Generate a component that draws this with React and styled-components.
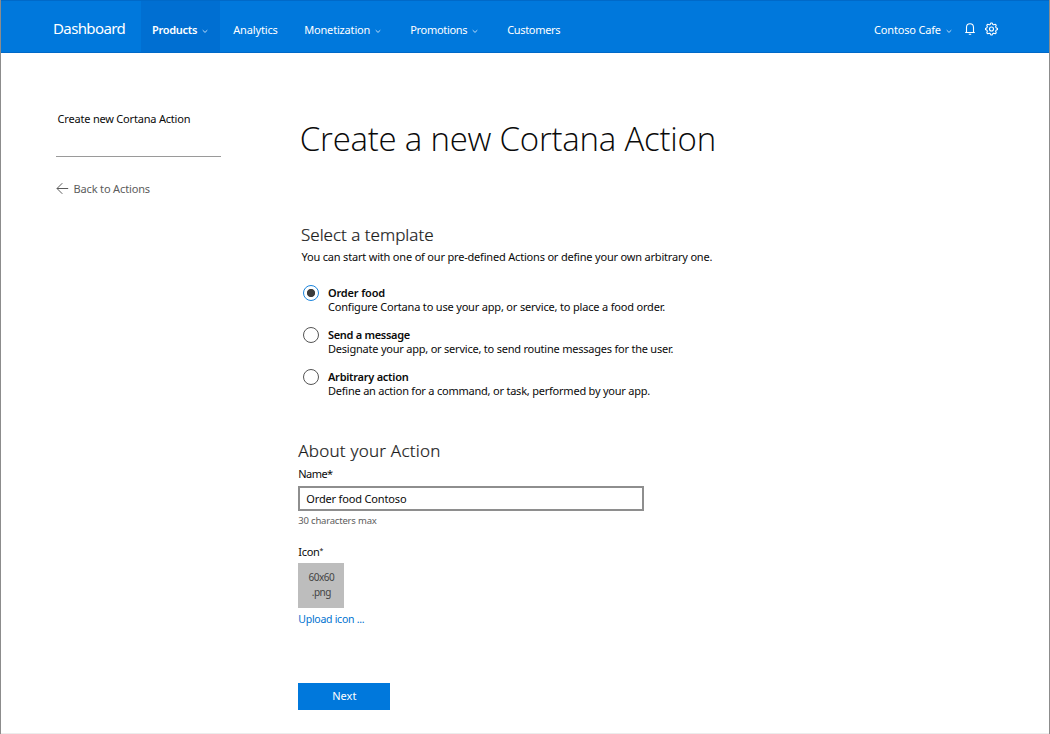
import React, { useState } from 'react';
import styled, { createGlobalStyle } from 'styled-components';

const GlobalStyle = createGlobalStyle`
  * { box-sizing: border-box; }
  body {
    margin: 0;
    background: #fff;
    color: #0a0a0a;
    font: 400 11px/14px "Noto Sans", "Open Sans", sans-serif;
  }
`;

const Page = styled.div`
  height: 734px;
  overflow: hidden;
  display: flex;
  flex-direction: column;
  border: solid #8c8c8c;
  border-width: 0 1px;
  box-shadow: inset 0 -1px #ececec;
`;

const Header = styled.header`
  height: 53px;
  margin: 0 -1px;
  flex: none;
  display: flex;
  align-items: stretch;
  background: #0078dc;
  border: 1px solid #0069c8;
  color: #fff;
`;

const Brand = styled.div`
  width: 140px;
  padding: 16px 0 0 52px;
  font-size: 15px;
  line-height: 22px;
  letter-spacing: -0.62px;
`;

const NavItem = styled.a`
  width: ${(p) => p.$width}px;
  padding: 22px 0 0 ${(p) => (p.$active ? 11 : 13.2)}px;
  display: flex;
  align-items: flex-start;
  gap: 5px;
  white-space: nowrap;
  background: ${(p) => (p.$active ? '#006fd2' : 'transparent')};
  font-weight: ${(p) => (p.$active ? 600 : 400)};
  letter-spacing: ${(p) => p.$track}px;
`;

const Account = styled.div`
  margin-left: auto;
  width: 175px;
  padding-top: 22px;
  display: flex;
  align-items: flex-start;
  white-space: nowrap;
  letter-spacing: -0.17px;

  & > svg:nth-of-type(1) { margin-left: 5px; }
  & > svg:nth-of-type(2) { margin: 0 0 0 13px; }
  & > svg:nth-of-type(3) { margin: -1px 0 0 10px; }
`;

const ChevronSvg = styled.svg`
  flex: none;
  margin-top: 6px;
`;

const Body = styled.div`
  flex: 1;
  display: flex;
  padding-left: 55px;
  gap: 77.3px;
`;

const Sidebar = styled.aside`
  width: 165px;
  padding-top: 59px;
`;

const SidebarTitle = styled.div`
  height: 45px;
  padding-left: 1.6px;
  border-bottom: 1px solid #9a9a9a;
  letter-spacing: -0.2px;
`;

const BackLink = styled.a`
  margin-top: 25px;
  display: flex;
  gap: 4.5px;
  color: #5c5c5c;
  letter-spacing: -0.15px;
`;

const Main = styled.main`
  padding-top: 64px;
  display: flex;
  flex-direction: column;
  align-items: flex-start;
`;

const Title = styled.h1`
  margin: 0 0 62px 1.5px;
  font-family: "Open Sans", "Noto Sans", sans-serif;
  font-weight: 300;
  font-size: 33px;
  line-height: 44px;
  letter-spacing: -0.23px;
`;

const SectionTitle = styled.h2`
  margin: 0;
  font-weight: 300;
  font-size: 17px;
  line-height: 24px;
  letter-spacing: ${(p) => p.$track}px;
  color: #1c1c1c;
  -webkit-text-stroke: 0.2px #1c1c1c;
`;

const TemplateSection = styled.section`
  padding-left: 2.7px;
`;

const Intro = styled.p`
  margin: 3px 0 22px;
  padding-left: 0.5px;
  letter-spacing: -0.19px;
`;

const Option = styled.label`
  display: flex;
  gap: 9px;
  margin: 0 0 14px 2px;
`;

const Radio = styled.input`
  appearance: none;
  width: 16px;
  height: 16px;
  margin: -1px 0 0;
  border: 1px solid ${(p) => (p.checked ? '#1a84dd' : '#555')};
  border-radius: 50%;
  background: ${(p) =>
    p.checked ? 'radial-gradient(circle, #3c3c3c 3.7px, #fff 4.5px)' : '#fff'};
`;

const OptionName = styled.div`
  font-weight: 600;
  letter-spacing: ${(p) => p.$track}px;
`;

const OptionText = styled.div`
  letter-spacing: ${(p) => p.$track}px;
`;

const AboutSection = styled.section`
  margin-top: 27px;
  display: flex;
  flex-direction: column;
  align-items: flex-start;
`;

const FieldLabel = styled.label`
  margin-top: ${(p) => p.$top}px;
  letter-spacing: ${(p) => p.$track}px;
`;

const TextInput = styled.input`
  width: 346px;
  height: 25px;
  margin-top: 5px;
  padding: 0 6px 1px;
  border: 2px solid #8e8e8e;
  outline: none;
  font: inherit;
  color: inherit;
  letter-spacing: -0.16px;
`;

const Hint = styled.div`
  margin-top: 4px;
  font-size: 9.5px;
  line-height: 12px;
  letter-spacing: -0.2px;
  color: #5c5c5c;
`;

const Asterisk = styled.span`
  font-size: 7px;
  line-height: 1;
  vertical-align: 3px;
`;

const IconPreview = styled.div`
  width: 46px;
  height: 45px;
  margin-top: 4px;
  padding-top: 7px;
  background: #bdbdbd;
  color: #444;
  font-size: 10px;
  line-height: 15px;
  letter-spacing: -0.5px;
  text-align: center;
`;

const UploadLink = styled.a`
  margin-top: 4px;
  font-size: 10.5px;
  letter-spacing: -0.27px;
  color: #0072d0;
`;

const NextButton = styled.button`
  width: 92px;
  height: 27px;
  margin-top: 57px;
  padding: 0 0 1px;
  border: 0;
  background: #0078dc;
  color: #fff;
  font: inherit;
`;

const Chevron = () => (
  <ChevronSvg width="6" height="5" viewBox="0 0 6 5" fill="none" stroke="#cfe5f8" strokeWidth="0.9">
    <path d="M.7 1.2 3 3.4 5.3 1.2" />
  </ChevronSvg>
);

const Bell = () => (
  <svg width="10" height="13" viewBox="0 0 10 13" fill="none" stroke="#fff" strokeWidth="1.1">
    <path d="M.2 9.500h9.600M1.500 9.500V4.400C1.500 2 3 .7 5 .7s3.500 1.300 3.500 3.700v5.100M3.800 11.200h2.400" />
  </svg>
);

const gearOutline = Array.from({ length: 32 }, (_, i) => {
  const angle = ((i - 0.5) * Math.PI) / 16;
  const r = i % 4 < 2 ? 6.1 : 4.7;
  return `${(6.5 + r * Math.cos(angle)).toFixed(2)},${(6.5 + r * Math.sin(angle)).toFixed(2)}`;
}).join(' ');

const Gear = () => (
  <svg width="13" height="14" viewBox="0 -.5 13 14" fill="none" stroke="#fff" strokeWidth="1.1">
    <polygon points={gearOutline} strokeLinejoin="round" />
    <circle cx="6.5" cy="6.5" r="2" />
  </svg>
);

const ArrowLeft = () => (
  <svg width="13" height="14" viewBox="0 0 13 14" fill="none" stroke="#5c5c5c" strokeWidth="1">
    <path d="M12.200 6.500H1M6.300 1.200 1 6.500l5.300 5.300" />
  </svg>
);

const navItems = [
  { label: 'Products', width: 79, track: -0.3, menu: true, active: true },
  { label: 'Analytics', width: 71, track: -0.15 },
  { label: 'Monetization', width: 106, track: -0.17, menu: true },
  { label: 'Promotions', width: 97, track: -0.3, menu: true },
  { label: 'Customers', width: 80, track: -0.33 },
];

const templates = [
  {
    name: 'Order food',
    nameTrack: -0.17,
    text: 'Configure Cortana to use your app, or service, to place a food order.',
    textTrack: -0.18,
  },
  {
    name: 'Send a message',
    nameTrack: -0.3,
    text: 'Designate your app, or service, to send routine messages for the user.',
    textTrack: -0.22,
  },
  {
    name: 'Arbitrary action',
    nameTrack: -0.26,
    text: 'Define an action for a command, or task, performed by your app.',
    textTrack: -0.22,
  },
];

export default function App() {
  const [selected, setSelected] = useState(0);
  return (
    <Page>
      <GlobalStyle />
      <Header>
        <Brand>Dashboard</Brand>
        {navItems.map((item) => (
          <NavItem key={item.label} $width={item.width} $track={item.track} $active={item.active}>
            {item.label}
            {item.menu && <Chevron />}
          </NavItem>
        ))}
        <Account>
          Contoso Cafe
          <Chevron />
          <Bell />
          <Gear />
        </Account>
      </Header>
      <Body>
        <Sidebar>
          <SidebarTitle>Create new Cortana Action</SidebarTitle>
          <BackLink>
            <ArrowLeft />
            Back to Actions
          </BackLink>
        </Sidebar>
        <Main>
          <Title>Create a new Cortana Action</Title>
          <TemplateSection>
            <SectionTitle $track={0}>Select a template</SectionTitle>
            <Intro>You can start with one of our pre-defined Actions or define your own arbitrary one.</Intro>
            {templates.map((t, i) => (
              <Option key={t.name}>
                <Radio
                  type="radio"
                  name="template"
                  checked={selected === i}
                  onChange={() => setSelected(i)}
                />
                <div>
                  <OptionName $track={t.nameTrack}>{t.name}</OptionName>
                  <OptionText $track={t.textTrack}>{t.text}</OptionText>
                </div>
              </Option>
            ))}
          </TemplateSection>
          <AboutSection>
            <SectionTitle $track={0.22}>About your Action</SectionTitle>
            <FieldLabel $top={4} $track={-0.55}>Name*</FieldLabel>
            <TextInput defaultValue="Order food Contoso" />
            <Hint>30 characters max</Hint>
            <FieldLabel $top={18} $track={-0.3}>
              Icon<Asterisk>*</Asterisk>
            </FieldLabel>
            <IconPreview>
              60x60
              <br />
              .png
            </IconPreview>
            <UploadLink>Upload icon ...</UploadLink>
            <NextButton>Next</NextButton>
          </AboutSection>
        </Main>
      </Body>
    </Page>
  );
}
